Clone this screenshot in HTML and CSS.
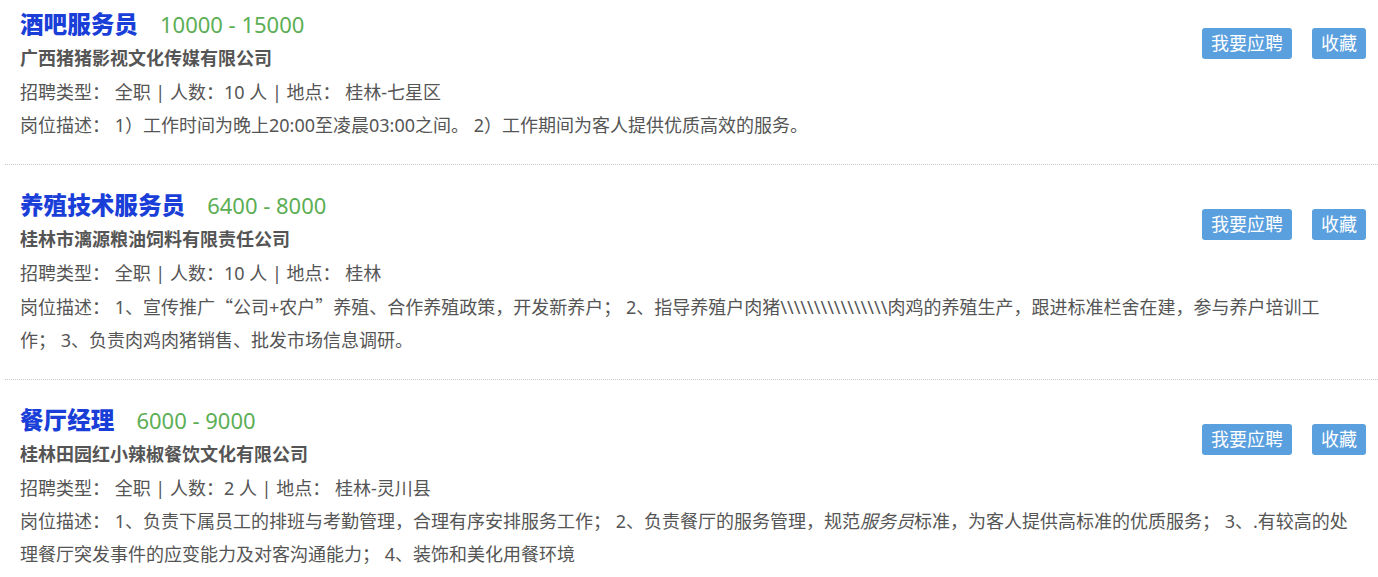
FILE: index.html
```html
<!DOCTYPE html>
<html lang="zh-CN">
<head>
<meta charset="utf-8">
<title>职位列表</title>
<link rel="stylesheet" href="styles.css">
</head>
<body>
<ul class="job-list">
  <li class="job">
    <div class="actions">
      <a class="btn" href="#">我要应聘</a>
      <a class="btn" href="#">收藏</a>
    </div>
    <div class="head">
      <a class="title" href="#">酒吧服务员</a>
      <span class="salary">10000 - 15000</span>
    </div>
    <div class="company">广西猪猪影视文化传媒有限公司</div>
    <div class="meta">招聘类型： 全职 | 人数：10 人 | 地点： 桂林-七星区</div>
    <div class="desc">岗位描述： 1）工作时间为晚上20:00至凌晨03:00之间。 2）工作期间为客人提供优质高效的服务。</div>
  </li>
  <li class="job">
    <div class="actions">
      <a class="btn" href="#">我要应聘</a>
      <a class="btn" href="#">收藏</a>
    </div>
    <div class="head">
      <a class="title" href="#">养殖技术服务员</a>
      <span class="salary">6400 - 8000</span>
    </div>
    <div class="company">桂林市漓源粮油饲料有限责任公司</div>
    <div class="meta">招聘类型： 全职 | 人数：10 人 | 地点： 桂林</div>
    <div class="desc">岗位描述： 1、宣传推广<span class="cjk">“</span>公司+农户<span class="cjk">”</span>养殖、合作养殖政策，开发新养户； 2、指导养殖户肉猪\\\\\\\\\\\\\\\\肉鸡的养殖生产，跟进标准栏舍在建，参与养户培训工作； 3、负责肉鸡肉猪销售、批发市场信息调研。</div>
  </li>
  <li class="job">
    <div class="actions">
      <a class="btn" href="#">我要应聘</a>
      <a class="btn" href="#">收藏</a>
    </div>
    <div class="head">
      <a class="title" href="#">餐厅经理</a>
      <span class="salary">6000 - 9000</span>
    </div>
    <div class="company">桂林田园红小辣椒餐饮文化有限公司</div>
    <div class="meta">招聘类型： 全职 | 人数：2 人 | 地点： 桂林-灵川县</div>
    <div class="desc">岗位描述： 1、负责下属员工的排班与考勤管理，合理有序安排服务工作； 2、负责餐厅的服务管理，规范<em>服务员</em>标准，为客人提供高标准的优质服务； 3、.有较高的处理餐厅突发事件的应变能力及对客沟通能力； 4、装饰和美化用餐环境</div>
  </li>
</ul>
</body>
</html>
```

FILE: styles.css
```css
html, body {
  margin: 0;
  padding: 0;
  background: #fff;
}

body {
  font-family: "Noto Sans", "Noto Sans CJK SC", sans-serif;
  font-size: 18px;
  color: #555;
}

.job-list {
  list-style: none;
  margin: 0 0 0 5px;
  padding: 0;
}

.job {
  padding: 23px 24px 22px 15px;
  border-bottom: 1px dotted #c8c8c8;
}

.job:first-child {
  padding-top: 7px;
}

.job:last-child {
  border-bottom: none;
}

.actions {
  float: right;
  display: flex;
  gap: 20px;
  margin: 21px -12px 0 0;
}

.btn {
  display: block;
  height: 31px;
  line-height: 31px;
  padding: 0 9px;
  background: #5ba0de;
  color: #fff;
  border-radius: 3px;
  text-decoration: none;
  font-size: 18px;
}

.head {
  display: flex;
  align-items: baseline;
  height: 34px;
  line-height: 34px;
}

.title {
  font-size: 23.6px;
  font-weight: 900;
  color: #1a3fd8;
  text-decoration: none;
}

.salary {
  margin-left: 22px;
  font-size: 22px;
  color: #5cae55;
}

.company {
  font-weight: bold;
  line-height: 35px;
}

.meta,
.desc {
  line-height: 33px;
}

.cjk {
  font-family: "Noto Sans CJK SC", sans-serif;
}

em {
  font-style: italic;
}
```
